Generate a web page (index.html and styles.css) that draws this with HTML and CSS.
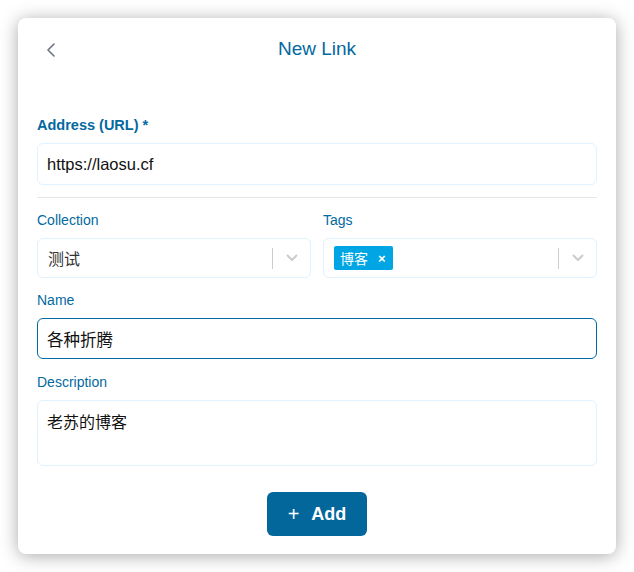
FILE: index.html
```html
<!DOCTYPE html>
<html>
<head>
<meta charset="utf-8">
<title>New Link</title>
<link rel="stylesheet" href="styles.css">
</head>
<body>
<div class="card">
  <div class="header">
    <button class="back" aria-label="Back">
      <svg width="10" height="16" viewBox="0 0 10 16"><path d="M8 2 L2 8 L8 14" fill="none" stroke="#6b7280" stroke-width="1.6" stroke-linecap="round" stroke-linejoin="round"/></svg>
    </button>
    <h1 class="title">New Link</h1>
  </div>
  <form class="form">
    <label class="label label-strong">Address (URL) *</label>
    <div class="input">https://laosu.cf</div>
    <hr class="divider">
    <div class="row">
      <div class="col">
        <label class="label">Collection</label>
        <div class="select">
          <span class="select-value">测试</span>
          <span class="select-sep"></span>
          <span class="select-caret"><svg width="12" height="8" viewBox="0 0 12 8"><path d="M1.5 1.5 L6 6 L10.5 1.5" fill="none" stroke="#cccccc" stroke-width="2" stroke-linecap="round" stroke-linejoin="round"/></svg></span>
        </div>
      </div>
      <div class="col">
        <label class="label">Tags</label>
        <div class="select">
          <span class="select-value"><span class="chip">博客<span class="chip-x">×</span></span></span>
          <span class="select-sep"></span>
          <span class="select-caret"><svg width="12" height="8" viewBox="0 0 12 8"><path d="M1.5 1.5 L6 6 L10.5 1.5" fill="none" stroke="#cccccc" stroke-width="2" stroke-linecap="round" stroke-linejoin="round"/></svg></span>
        </div>
      </div>
    </div>
    <label class="label gap-top">Name</label>
    <div class="input input-focus">各种折腾</div>
    <label class="label gap-top2">Description</label>
    <div class="textarea">老苏的博客</div>
    <div class="actions">
      <button type="button" class="add"><span class="plus">+</span>Add</button>
    </div>
  </form>
</div>
</body>
</html>
```
FILE: styles.css
```css
* { box-sizing: border-box; }
html, body { margin: 0; padding: 0; background: #ffffff; }
body {
  padding: 18px;
  font-family: "Liberation Sans", "Noto Sans CJK SC", sans-serif;
}
.card {
  width: 598px;
  height: 536px;
  background: #ffffff;
  border-radius: 8px;
  box-shadow: 0 2px 18px rgba(0, 0, 0, 0.34);
  padding: 0 19px 18px;
}
.header {
  height: 62px;
  display: flex;
  align-items: center;
  justify-content: center;
  position: relative;
}
.back {
  position: absolute;
  left: 9px;
  top: 23px;
  border: 0;
  background: none;
  padding: 0;
  width: 12px;
  height: 18px;
  display: flex;
  align-items: center;
}
.title {
  margin: 0;
  font-size: 19px;
  font-weight: 400;
  color: #0369a1;
}
.form { display: flex; flex-direction: column; margin-top: 37px; }
.label {
  display: block;
  font-size: 14px;
  line-height: 16px;
  color: #0369a1;
  margin-bottom: 10px;
}
.label-strong { font-weight: 700; font-size: 14.5px; }
.input {
  height: 42px;
  border: 1px solid #e0f2fe;
  border-radius: 6px;
  padding: 0 9px;
  display: flex;
  align-items: center;
  font-size: 16.5px;
  color: #111111;
}
.input-focus { height: 41px; border-color: #0369a1; }
.divider {
  margin: 12px 0 0;
  border: 0;
  border-top: 1px solid #e5e7eb;
  height: 0;
}
.row {
  display: grid;
  grid-template-columns: 1fr 1fr;
  column-gap: 12px;
  margin-top: 14px;
}
.select {
  height: 40px;
  border: 1px solid #e0f2fe;
  border-radius: 6px;
  display: flex;
  align-items: center;
}
.select-value {
  flex: 1;
  padding-left: 10px;
  font-size: 16px;
  color: #333333;
  display: flex;
  align-items: center;
}
.select-sep {
  width: 1px;
  height: 21px;
  background: #cccccc;
}
.select-caret {
  width: 37px;
  display: flex;
  justify-content: center;
  align-items: center;
}
.chip {
  display: inline-flex;
  align-items: center;
  height: 24px;
  background: #00a6e4;
  color: #ffffff;
  border-radius: 2px;
  padding: 0 7px 0 6px;
  font-size: 14px;
  margin-left: 0;
}
.chip-x {
  font-size: 13px;
  font-weight: 700;
  margin-left: 10px;
}
.gap-top { margin-top: 14px; }
.gap-top2 { margin-top: 15px; }
.textarea {
  height: 66px;
  border: 1px solid #e0f2fe;
  border-radius: 6px;
  padding: 11px 9px;
  font-size: 16px;
  line-height: 22px;
  color: #111111;
}
.actions {
  display: flex;
  justify-content: center;
  margin-top: 26px;
}
.add {
  width: 100px;
  height: 44px;
  border: 0;
  border-radius: 6px;
  background: #03679c;
  color: #ffffff;
  font-family: "Liberation Sans", sans-serif;
  font-size: 18px;
  font-weight: 700;
  display: flex;
  align-items: center;
  justify-content: center;
}
.plus {
  font-weight: 400;
  font-size: 20px;
  margin-right: 12px;
}
```
